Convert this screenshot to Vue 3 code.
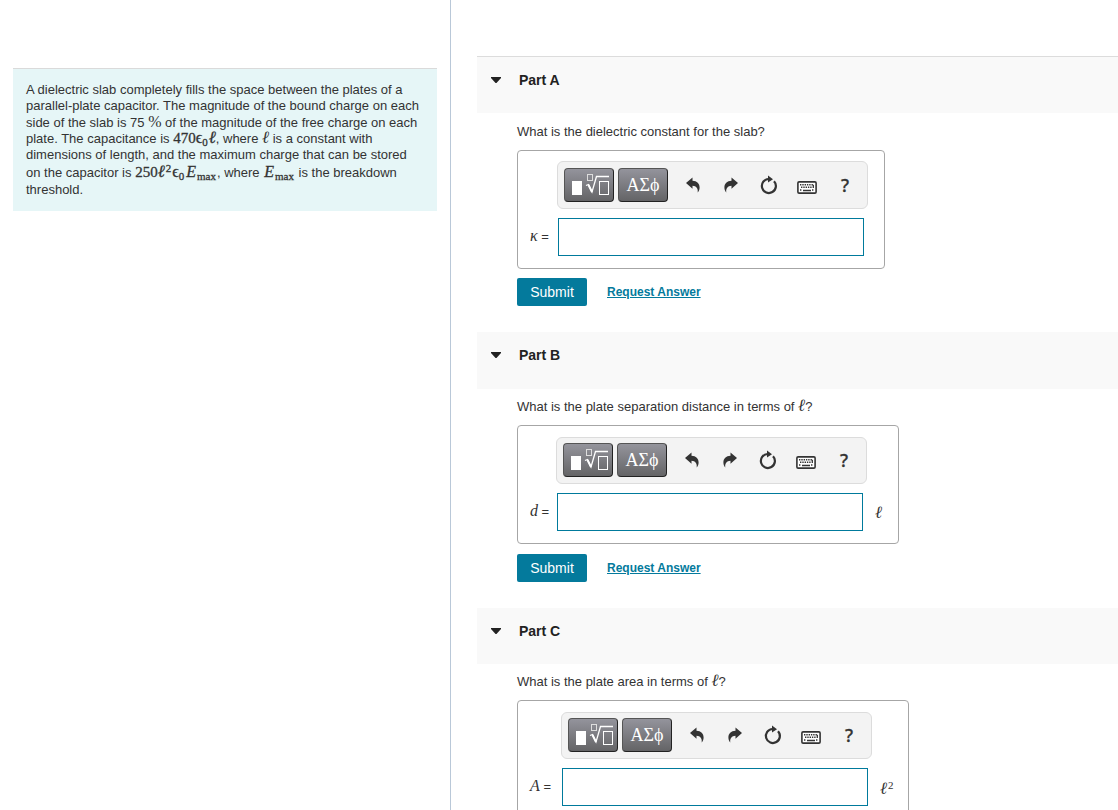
<script setup>
const parts = [
  { id: 'a', title: 'Part A', question: 'What is the dielectric constant for the slab?', symbol: 'κ', cls: 'kappa' },
  { id: 'b', title: 'Part B', question: 'What is the plate separation distance in terms of ', ell: true, symbol: 'd', cls: 'dist', unit: 'ℓ' },
  { id: 'c', title: 'Part C', question: 'What is the plate area in terms of ', ell: true, symbol: 'A', cls: 'area', unit: 'ℓ', power: '2', last: true }
]
</script>

<template>
  <div class="page">
    <aside class="side">
      <p class="problem">
        <span class="line">A dielectric slab completely fills the space between the plates of a </span>
        <span class="line">parallel-plate capacitor. The magnitude of the bound charge on each </span>
        <span class="line mid">side of the slab is 75 <span class="math percent">%</span> of the magnitude of the free charge on each </span>
        <span class="line">plate. The capacitance is <span class="math bold">470<span class="eps">ϵ</span><sub>0</sub><span class="ell">ℓ</span></span>, where <span class="math ell">ℓ</span> is a constant with </span>
        <span class="line">dimensions of length, and the maximum charge that can be stored </span>
        <span class="line tall">on the capacitor is <span class="math bold">250<span class="ell">ℓ</span><sup>2</sup><span class="eps">ϵ</span><sub>0</sub><i>E</i><sub>max</sub></span>, where <span class="math bold"><i>E</i><sub>max</sub></span> is the breakdown </span>
        <span class="line">threshold.</span>
      </p>
    </aside>

    <main class="content">
      <section v-for="p in parts" :key="p.id" class="part" :class="p.cls">
        <header class="head">
          <button class="toggle" type="button" :aria-label="'Collapse ' + p.title">
            <svg width="10" height="6" viewBox="0 0 10 6"><path d="M0 0H10V1L5.5 6H4.5L0 1Z" fill="#222" /></svg>
          </button>
          <h2>{{ p.title }}</h2>
        </header>

        <div class="body">
          <p class="question">{{ p.question }}<template v-if="p.ell"><span class="math ell">ℓ</span>?</template></p>

          <div class="answer">
            <div class="toolbar">
              <button type="button" class="dark" aria-label="Templates">
                <svg width="40" height="26" viewBox="0 0 40 26" fill="none" stroke="#fff">
                  <rect x="3" y="9" width="10" height="14" fill="#fff" stroke="none" />
                  <rect x="18.500" y="2.500" width="5" height="6" stroke="#ddd" />
                  <path d="M17 13.500L19.500 12.500L23 20L27.500 4.500H40" stroke-width="1.300" />
                  <path d="M19.500 13L23 20" stroke-width="2" />
                  <rect x="30.500" y="9.500" width="9" height="13" />
                </svg>
              </button>
              <button type="button" class="dark greek">ΑΣϕ</button>
              <button type="button" class="tool" aria-label="Undo">
                <svg width="14" height="16" viewBox="0 0 14 16"><path d="M0 6L6.500 0.500V3.800C11 4 13.600 6.500 13.600 10.500C13.600 12.500 12.900 14.200 11.700 15.500C12.200 11.500 10.500 9 6.500 8.800V11.800Z" fill="#333" /></svg>
              </button>
              <button type="button" class="tool" aria-label="Redo">
                <svg width="14" height="16" viewBox="0 0 14 16"><path d="M14 6L7.500 0.500V3.800C3 4 0.400 6.500 0.400 10.500C0.400 12.500 1.100 14.200 2.300 15.500C1.800 11.500 3.500 9 7.500 8.800V11.800Z" fill="#333" /></svg>
              </button>
              <button type="button" class="tool" aria-label="Reset">
                <svg width="18" height="20" viewBox="0 0 18 20"><path d="M14 6.200A7 7 0 1 1 8.500 4" fill="none" stroke="#333" stroke-width="2.200" /><path d="M8 0.500L13 4.300L8 7.500Z" fill="#333" /></svg>
              </button>
              <button type="button" class="tool low" aria-label="Keyboard">
                <svg width="20" height="13" viewBox="0 0 20 13"><rect x="0.900" y="0.900" width="18.200" height="11.200" rx="1.200" fill="#fff" stroke="#333" stroke-width="1.600" /><path d="M3 3.700H17M4 6.300H15M3 9H5M15 9H17" stroke="#333" stroke-width="1.500" stroke-dasharray="1.400 0.900" /><path d="M6 9.500H14M16.300 4V7" stroke="#333" stroke-width="1.300" /></svg>
              </button>
              <button type="button" class="tool help">?</button>
            </div>
            <label class="symbol" :for="'answer-' + p.id"><i class="math">{{ p.symbol }}</i> =</label>
            <input :id="'answer-' + p.id" class="field" type="text" />
            <span v-if="p.unit" class="unit math ell">{{ p.unit }}<sup v-if="p.power">{{ p.power }}</sup></span>
          </div>

          <div v-if="!p.last" class="actions">
            <button type="button" class="submit">Submit</button>
            <a href="#">Request Answer</a>
          </div>
        </div>
      </section>
    </main>
  </div>
</template>

<style>
body { overflow: hidden; }
</style>

<style scoped>
.page {
  display: flex;
  height: 100vh;
  overflow: hidden;
  background: #fff;
  color: #333;
  font: 13px/16px "Liberation Sans", Arial, sans-serif;
}
.page *, .page { box-sizing: border-box; }
p, h2 { margin: 0; }
button { padding: 0; border: 0; background: none; font-family: inherit; color: inherit; }
svg { display: block; }

.side {
  flex: 0 0 451px;
  padding: 68px 13px 0;
  border-right: 1px solid #b9c8d8;
}
.problem {
  padding: 13px 0 13px 13px;
  border-top: 1px solid #dadada;
  background: #e6f6f7;
}
.line { display: block; height: 16px; white-space: nowrap; }
.mid { height: 17px; line-height: 17px; }
.tall { height: 19px; line-height: 20px; }

.math { font-family: "Liberation Serif", "DejaVu Serif", serif; font-size: 15px; line-height: 1px; }
.percent { font-size: 16px; }
.bold { -webkit-text-stroke: 0.3px #333; }
.bold i { margin: 0 1px; font-size: 16px; }
.eps { font-size: 16px; }
.ell { font-family: "Liberation Serif", "DejaVu Serif", serif; font-size: 17px; font-style: italic; line-height: 1px; }
.math sub, .math sup { font-family: "Liberation Serif", serif; font-style: normal; font-size: 11px; line-height: 1px; }
.math sub { margin-right: 1px; vertical-align: -3px; }
.math sup { margin: 0 1px; vertical-align: 5px; }

.content { flex: 1; min-width: 0; padding: 56px 0 0 26px; }
.head {
  display: flex;
  align-items: flex-start;
  height: 57px;
  padding: 15px 0 0 14px;
  background: #f9f9f9;
}
.kappa .head { border-top: 1px solid #dcdcdc; }
.area .head { height: 56px; }
.toggle { display: flex; align-items: center; width: 28px; height: 16px; }
h2 { font-size: 14px; line-height: 16px; font-weight: bold; color: #222; }

.body { padding: 10px 0 26px 40px; }
.kappa .body { padding-top: 11px; }
.question { height: 16px; }

.answer {
  display: grid;
  width: max-content;
  row-gap: 9px;
  margin-top: 10px;
  padding: 11px 16px 12px 12px;
  border: 1px solid #a6a6a6;
  border-radius: 4px;
}
.kappa .answer { grid-template-columns: 27px 311px; }
.dist .answer { grid-template-columns: 26px 311px 15px; }
.area .answer { grid-template-columns: 31px 311px 20px; }
.kappa .toolbar { height: 48px; margin-top: -1px; }
.toolbar {
  grid-column: 2;
  display: flex;
  align-items: flex-start;
  height: 47px;
  padding: 5px 0 0 6px;
  border: 1px solid #dcdcdc;
  border-radius: 6px;
  background: #f3f3f3;
}
.kappa .toolbar { padding-top: 6px; }
.dark {
  display: flex;
  flex: none;
  align-items: center;
  justify-content: center;
  width: 50px;
  height: 34px;
  margin-right: 4px;
  border: 1px solid #555;
  border-right-color: #222;
  border-bottom-color: #222;
  border-radius: 4px;
  background: linear-gradient(#94949c, #646466);
  color: #fff;
}
.greek { margin-right: 6px; font: 18px/32px "Liberation Serif", serif; }
.tool { display: flex; flex: none; align-items: center; justify-content: center; width: 38px; height: 34px; color: #333; }
.low { padding-top: 5px; }
.help { font: 500 18px/34px "Noto Sans", sans-serif; -webkit-text-stroke: 0.3px #333; }
.symbol { grid-column: 1; align-self: center; white-space: nowrap; }
.field {
  grid-column: 2;
  width: 306px;
  height: 38px;
  margin: 0 0 0 1px;
  border: 1px solid #007a9c;
  border-radius: 0;
  background: #fff;
  font: 16px "Liberation Sans", sans-serif;
  outline: 0;
}
.symbol .math { font-size: 16px; }
.unit { grid-column: 3; align-self: center; padding-left: 8px; white-space: nowrap; }

.actions { display: flex; align-items: center; gap: 20px; margin-top: 9px; }
.dist .actions { margin-top: 10px; }
.submit {
  width: 70px;
  height: 28px;
  border-radius: 2px;
  background: #047a9c;
  color: #fff;
  font-size: 14px;
}
.actions a { color: #047a9c; font-size: 12px; font-weight: bold; }
</style>
